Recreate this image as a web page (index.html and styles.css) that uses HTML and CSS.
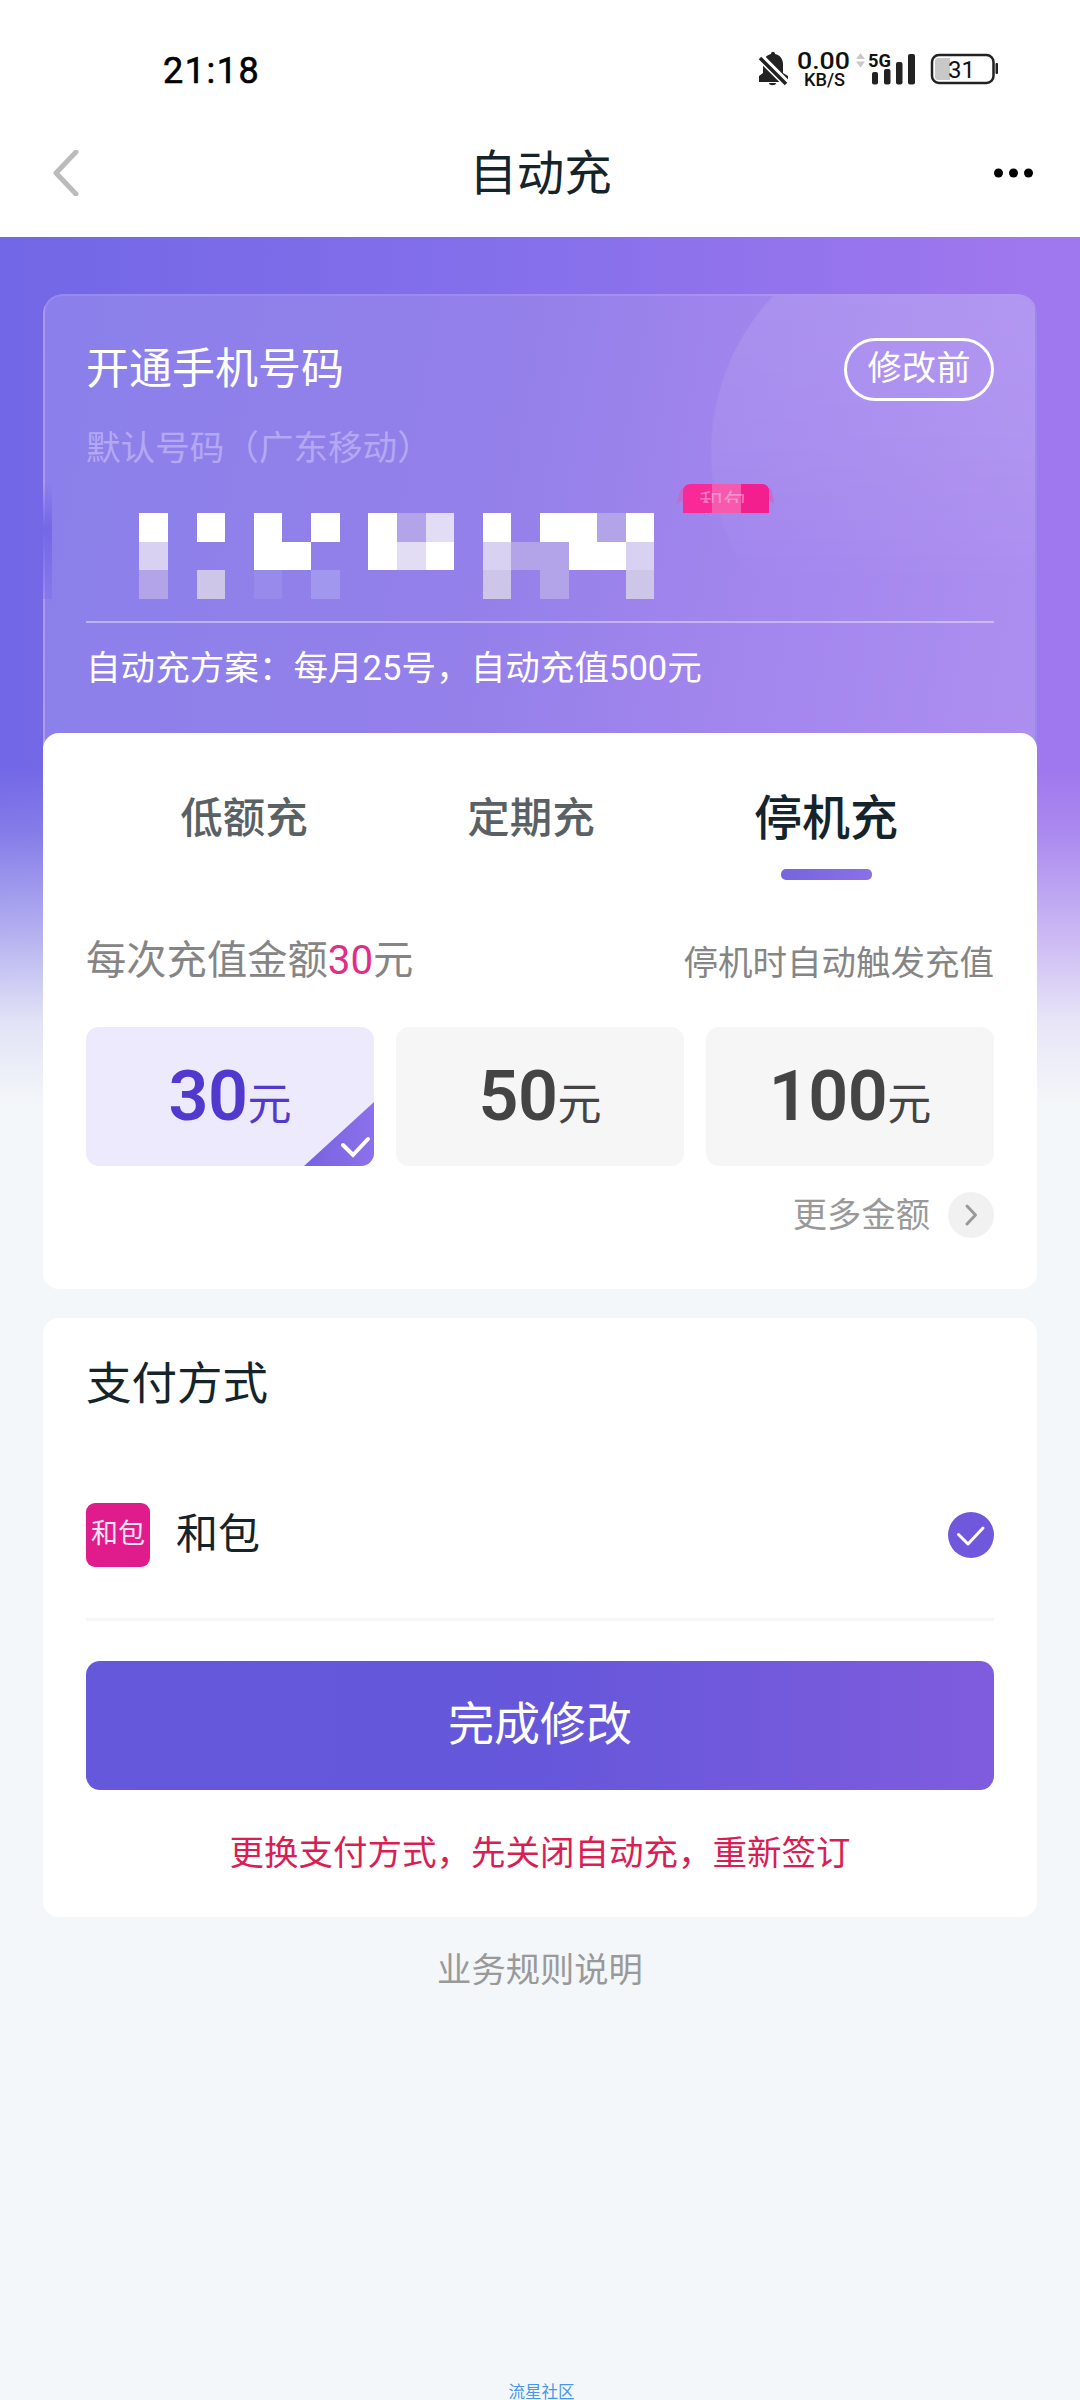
FILE: index.html
```html
<!DOCTYPE html>
<html lang="zh-CN">
<head>
<meta charset="utf-8">
<title>自动充</title>
<link rel="stylesheet" href="styles.css">
</head>
<body>
<div class="page">
  <header class="top">
    <div class="status">
      <span class="clock">21:18</span>
      <svg class="status-icons" width="250" height="44" viewBox="750 48 250 44">
        <g fill="#222">
          <path d="M759 82v-6l4-3v-9c0-6 4-9 8-10 0-3 4-3 4 0 5 1 8 5 8 10v9l5 3v6zM769 83h7c0 3-7 3-7 0z"/>
          <path d="M758 55l31 31" stroke="#fff" stroke-width="8"/>
          <path d="M760 58l26 26" stroke="#222" stroke-width="3.5"/>
          <rect x="872" y="72" width="6" height="12.500" rx="2"/>
          <rect x="884" y="69" width="6.500" height="15.500" rx="2"/>
          <rect x="896" y="62" width="6.500" height="22.500" rx="2"/>
          <rect x="908" y="54" width="7" height="30.500" rx="2"/>
          <rect x="995.500" y="63" width="2.500" height="11" rx="1"/>
        </g>
        <g fill="#c8c8c8"><path d="M856 59l4.500-6 4.500 6zM856 61.500h9l-4.500 6z"/><path d="M938 58h12v22h-12q-3 0-3-3V61q0-3 3-3z"/></g>
        <rect x="932" y="55" width="61.500" height="28" rx="7" fill="none" stroke="#222" stroke-width="2.500"/>
        <g font-family="Roboto, sans-serif" fill="#111">
          <text x="797" y="69" font-size="23.500" font-weight="500" textLength="53" lengthAdjust="spacingAndGlyphs">0.00</text>
          <text x="804" y="86" font-size="17.500" font-weight="500" textLength="41" lengthAdjust="spacingAndGlyphs">KB/S</text>
          <text x="868" y="67" font-size="19" font-weight="700" textLength="23" lengthAdjust="spacingAndGlyphs">5G</text>
          <text x="948" y="78" font-size="24" textLength="27" lengthAdjust="spacingAndGlyphs">31</text>
        </g>
      </svg>
    </div>
    <nav class="nav">
      <svg width="28" height="46" viewBox="0 0 28 46"><path d="M25 2L5 23l20 21" fill="none" stroke="#bbb" stroke-width="5" stroke-linecap="round" stroke-linejoin="round"/></svg>
      <h1>自动充</h1>
      <svg width="42" height="10" viewBox="0 0 42 10"><circle cx="5.500" cy="5" r="4.500"/><circle cx="20.500" cy="5" r="4.500"/><circle cx="35.500" cy="5" r="4.500"/></svg>
    </nav>
  </header>

  <main class="content">
    <section class="phone">
      <div class="phone-head"><h2>开通手机号码</h2><span class="pill">修改前</span></div>
      <p class="region">默认号码（广东移动）</p>
      <div class="number">
        <svg width="860" height="118" viewBox="43 481 860 118">
          <defs>
            <linearGradient id="edge" x2="0" y2="1"><stop offset="0" stop-color="#7468e6" stop-opacity="0"/><stop offset=".4" stop-color="#7468e6"/><stop offset="1" stop-color="#7468e6" stop-opacity=".3"/></linearGradient>
          </defs>
          <rect x="43" y="482" width="9" height="117" fill="url(#edge)"/>
          <path d="M683 513v-21q0-8 8-8h70q8 0 8 8v21z" fill="#f92a98"/>
          <path d="M683 487q-4 4-6 17l6-4zM769 487q4 4 5 17l-5-4z" fill="#e750b0" opacity=".5"/>
          <path d="M741 484h20q8 0 8 8v21h-28z" fill="#f31f8e"/>
          <rect x="712" y="484" width="29" height="29" fill="#f55aae"/>
          <text x="699" y="511" font-size="24" fill="#fff" opacity=".35" class="tag">和包</text>
          <rect x="697" y="503" width="15" height="10" fill="#f92a98"/><rect x="712" y="503" width="29" height="10" fill="#f55aae"/><rect x="741" y="503" width="9" height="10" fill="#f31f8e"/>
          <rect x="82" y="513" width="28" height="29" fill="#8c80e9"/>
          <g fill="#fff">
            <path d="M139 513h29v29h-29zM197 513h28v29h-28zM254 513h28v29h29v28h-57zM311 513h29v29h-29zM368 513h29v57h-29zM426 542h28v28h-28zM483 513h28v29h-28zM540 513h57v57h-28v-28h-29zM626 513h28v29h-28zM597 542h29v28h-29z"/>
          </g>
          <g fill="#d8d1f1"><path d="M139 542h29v28h-29zM483 542h28v28h-28zM626 542h28v28h-28z"/></g>
          <path d="M426 513h28v29h-28zM397 542h29v28h-29z" fill="#e2ddf5"/>
          <g fill="#b3a4ea"><path d="M139 570h29v29h-29zM397 513h29v29h-29zM511 542h58v28h-58zM540 570h29v29h-29zM597 513h29v29h-29z"/></g>
          <g fill="#cdc6e8"><path d="M197 570h28v29h-28zM483 570h28v29h-28zM626 570h28v29h-28z"/></g>
          <path d="M254 570h28v29h-28z" fill="#988aeb"/><path d="M311 570h29v29h-29z" fill="#a297ee"/>
        </svg>
      </div>
      <p class="plan">自动充方案：每月25号，自动充值500元</p>
    </section>

    <section class="card recharge">
      <div class="tabs">
        <span class="tab">低额充</span>
        <span class="tab">定期充</span>
        <span class="tab active">停机充</span>
      </div>
      <div class="summary"><p class="each">每次充值金额<b>30</b>元</p><p class="hint">停机时自动触发充值</p></div>
      <div class="amounts">
        <div class="amount selected"><b>30</b><i>元</i>
          <svg class="corner" width="70" height="64" viewBox="0 0 70 64"><defs><linearGradient id="cg"><stop offset="0" stop-color="#7663df"/><stop offset="1" stop-color="#8c70eb"/></linearGradient></defs><path d="M0 64L70 0v64z" fill="url(#cg)"/><path d="M39 43l10 10 15-16" fill="none" stroke="#fff" stroke-width="4" stroke-linecap="round"/></svg>
        </div>
        <div class="amount"><b>50</b><i>元</i></div>
        <div class="amount"><b>100</b><i>元</i></div>
      </div>
      <div class="more"><span>更多金额</span>
        <svg width="46" height="46" viewBox="0 0 46 46"><circle cx="23" cy="23" r="23" fill="#f1f1f1"/><path d="M19 14l8.500 9-8.500 9" fill="none" stroke="#999" stroke-width="3" stroke-linecap="round" stroke-linejoin="round"/></svg>
      </div>
    </section>

    <section class="card pay">
      <h3>支付方式</h3>
      <div class="method">
        <span class="logo">和包</span><span class="name">和包</span>
        <svg width="46" height="46" viewBox="0 0 46 46"><circle cx="23" cy="23" r="23" fill="#6f58dc"/><path d="M10.500 22.500l9.500 9.500 15-16" fill="none" stroke="#fff" stroke-width="3" stroke-linecap="round" stroke-linejoin="round"/></svg>
      </div>
      <button class="submit" type="button">完成修改</button>
      <p class="warn">更换支付方式，先关闭自动充，重新签订</p>
    </section>
    <p class="rules">业务规则说明</p>
    <p class="community">流星社区</p>
  </main>
</div>
</body>
</html>
```
FILE: styles.css
```css
* { box-sizing: border-box; margin: 0; padding: 0; }
body { font-family: Roboto, "Noto Sans CJK SC", sans-serif; color: #14242a; background: #f4f7f9; }
svg { display: block; flex: none; }
h1, h2, h3 { font-weight: 400; }
.page { width: 1080px; height: 2400px; overflow: hidden; display: flex; flex-direction: column; }

.top { height: 237px; flex: none; background: #fff; padding-top: 48px; }
.status { height: 44px; display: flex; align-items: center; justify-content: space-between; padding: 0 80px 0 163px; }
.clock { font-size: 36px; line-height: 44px; padding-top: 1px; color: #000; letter-spacing: 1.5px; -webkit-text-stroke: 0.6px #000; }
.nav { height: 80px; margin-top: 41px; padding: 0 45px 0 51px; display: flex; align-items: center; justify-content: space-between; }
.nav h1 { font-size: 47.5px; line-height: 80px; padding: 2px 0 0 9px; }

.content {
  flex: 1; min-height: 0; padding: 57px 43px 0; display: flex; flex-direction: column;
  background:
    linear-gradient(to bottom, rgba(244,247,249,0) 530px, rgba(244,247,249,.14) 595px, rgba(244,247,249,.52) 700px, rgba(244,247,249,.86) 785px, #f4f7f9 870px),
    linear-gradient(to right, #7267e6, #8670eb 50%, #9f77ee 95%);
}
.phone {
  height: 459px; flex: none; margin-bottom: -20px; padding: 0 41px; border-radius: 20px 20px 0 0;
  border: 2px solid rgba(255,255,255,.09); border-bottom: 0; color: #fff; position: relative;
  background: linear-gradient(100deg, #8a80eb, #9480e9 45%, #a386ee 72%, #ad8ff0);
}
.phone::before {
  content: ""; position: absolute; inset: 0; border-radius: 18px 18px 0 0;
  background: radial-gradient(circle at 893px 156px, rgba(255,255,255,.1) 226px, transparent 228px);
  -webkit-mask-image: linear-gradient(to bottom, #000 0, rgba(0,0,0,.65) 150px, transparent 300px);
  mask-image: linear-gradient(to bottom, #000 0, rgba(0,0,0,.65) 150px, transparent 300px);
}
.phone > * { position: relative; }
.phone-head { display: flex; justify-content: space-between; align-items: center; height: 64px; margin-top: 41px; }
.phone-head h2 { font-size: 43px; line-height: 60px; }
.pill { width: 150px; height: 63px; border: 3px solid #fff; border-radius: 32px; font-size: 34.300px; line-height: 55px; text-align: center; }
.region { font-size: 34.600px; line-height: 50px; margin-top: 22px; color: #b4a8f3; }
.number { height: 140px; margin: 8px 0 0 -43px; }
.tag { font-family: "Noto Sans CJK SC", sans-serif; }
.plan { border-top: 2px solid rgba(255,255,255,.4); font-size: 34.600px; line-height: 50px; padding-top: 20px; }

.card { flex: none; background: #fff; border-radius: 16px; padding: 0 43px; position: relative; }
.recharge { height: 556px; }
.tabs { display: grid; grid-template-columns: repeat(3, 287px); justify-content: center; height: 150px; padding-top: 53px; }
.tab { font-size: 42.500px; font-weight: 500; color: #596164; line-height: 66px; text-align: center; padding-right: 18px; }
.tab.active { font-size: 48px; color: #14242a; padding-right: 2px; }
.active::after { content: ""; display: block; width: 91px; height: 11px; margin: 17px auto 0; border-radius: 5px; background: linear-gradient(to right, #7565df, #8b70e7); }
.summary { display: flex; justify-content: space-between; margin-top: 48px; line-height: 60px; color: #858585; }
.each { font-size: 40.300px; }
.each b { font-weight: 400; color: #e12d86; }
.hint { font-size: 34.500px; padding-top: 2px; }
.amounts { display: grid; grid-template-columns: repeat(3, 288px); gap: 22px; margin-top: 34px; }
.amount { height: 139px; border-radius: 13px; background: #f6f6f6; color: #444; display: flex; justify-content: center; align-items: baseline; line-height: 139px; position: relative; overflow: hidden; }
.amount b { font-size: 70px; font-weight: 600; letter-spacing: -0.5px; }
.amount i { font-size: 44px; font-style: normal; }
.selected { background: #eeeafe; color: #5239ce; }
.corner { position: absolute; right: 0; bottom: 0; }
.more { display: flex; justify-content: flex-end; align-items: center; gap: 18px; height: 46px; margin-top: 26px; font-size: 34.300px; color: #999; line-height: 46px; }

.pay { height: 599px; margin-top: 29px; }
.pay h3 { font-size: 45.500px; line-height: 70px; padding-top: 32px; }
.method { display: flex; align-items: center; height: 170px; margin-top: 31px; border-bottom: 3px solid #f6f7f7; }
.logo { width: 64px; height: 64px; border-radius: 9px; background: #e01b8b; color: #ffe6f4; font-size: 27px; line-height: 63px; text-align: center; }
.name { font-size: 42px; line-height: 60px; flex: 1; padding: 1px 0 0 26px; }
.submit { display: block; width: 908px; height: 129px; margin-top: 40px; border: 0; border-radius: 14px; font: 400 46px/126px Roboto, "Noto Sans CJK SC", sans-serif; color: #fff; padding-bottom: 3px; background: linear-gradient(to right, #6558db, #6657da 50%, #7f5cdd); }
.warn { font-size: 34.500px; line-height: 50px; margin-top: 38px; text-align: center; color: #da1e54; }
.rules { font-size: 34.300px; line-height: 50px; margin-top: 28px; text-align: center; color: #999; }
.community { margin-top: auto; height: 19px; font-size: 16.500px; line-height: 24px; padding-left: 3px; color: #4597ee; text-align: center; flex: none; }
```
